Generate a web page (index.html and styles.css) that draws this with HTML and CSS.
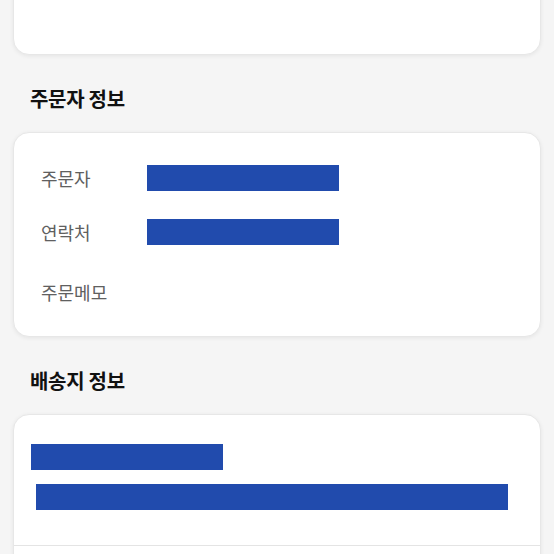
FILE: index.html
```html
<!DOCTYPE html>
<html lang="ko">
  <head>
    <meta charset="UTF-8" />
    <title>주문서</title>
    <link rel="stylesheet" href="styles.css">
  </head>

  <body>
    <div id="order">
      <div class="card card-top"></div>

      <h2 class="title">주문자 정보</h2>
      <div class="card info">
        <div class="row">
          <span class="label">주문자</span>
          <span class="mask mask-short"></span>
        </div>
        <div class="row">
          <span class="label">연락처</span>
          <span class="mask mask-short"></span>
        </div>
        <div class="row row-memo">
          <span class="label">주문메모</span>
        </div>
      </div>

      <h2 class="title">배송지 정보</h2>
      <div class="card address">
        <div class="addr-body">
          <span class="mask mask-name"></span>
          <span class="mask mask-line"></span>
        </div>
        <div class="addr-foot"></div>
      </div>
    </div>
  </body>
</html>
```

FILE: styles.css
```css
* {
  padding: 0px;
  margin: 0px;
  box-sizing: border-box;
}

html,
body {
  width: 100%;
  min-height: 100%;
}

body {
  background: #f5f5f5;
  font-family: "Noto Sans CJK KR", "Noto Sans", sans-serif;
  color: #111;
  overflow: hidden;
}

#order {
  padding: 0 13px;
}

.card {
  background: #fff;
  border: 1px solid #e7e7e7;
  border-radius: 16px;
  box-shadow: 0 1px 4px rgba(0, 0, 0, 0.07);
}

.card-top {
  height: 100px;
  margin-top: -45px;
}

.title {
  font-size: 20px;
  font-weight: 700;
  line-height: 28px;
  letter-spacing: -0.3px;
  word-spacing: -1px;
  padding: 30px 17px 19px;
}

.info {
  padding: 18px 0 17px 27px;
}

.row {
  display: flex;
  align-items: center;
  height: 54px;
}

.row-memo {
  margin-top: 6px;
}

.label {
  width: 106px;
  font-size: 18px;
  line-height: 24px;
  color: #606060;
  margin-top: -1px;
}

.mask {
  display: block;
  height: 26px;
  background: #214bad;
}

.mask-short {
  width: 192px;
}

.address {
  height: 160px;
  border-bottom-left-radius: 0;
  border-bottom-right-radius: 0;
  overflow: hidden;
}

.addr-body {
  display: flex;
  flex-direction: column;
  gap: 14px;
  padding: 29px 17px 35px;
  border-bottom: 1px solid #e4e4e4;
}

.mask-name {
  width: 192px;
}

.mask-line {
  width: 472px;
  margin-left: 5px;
}
```
